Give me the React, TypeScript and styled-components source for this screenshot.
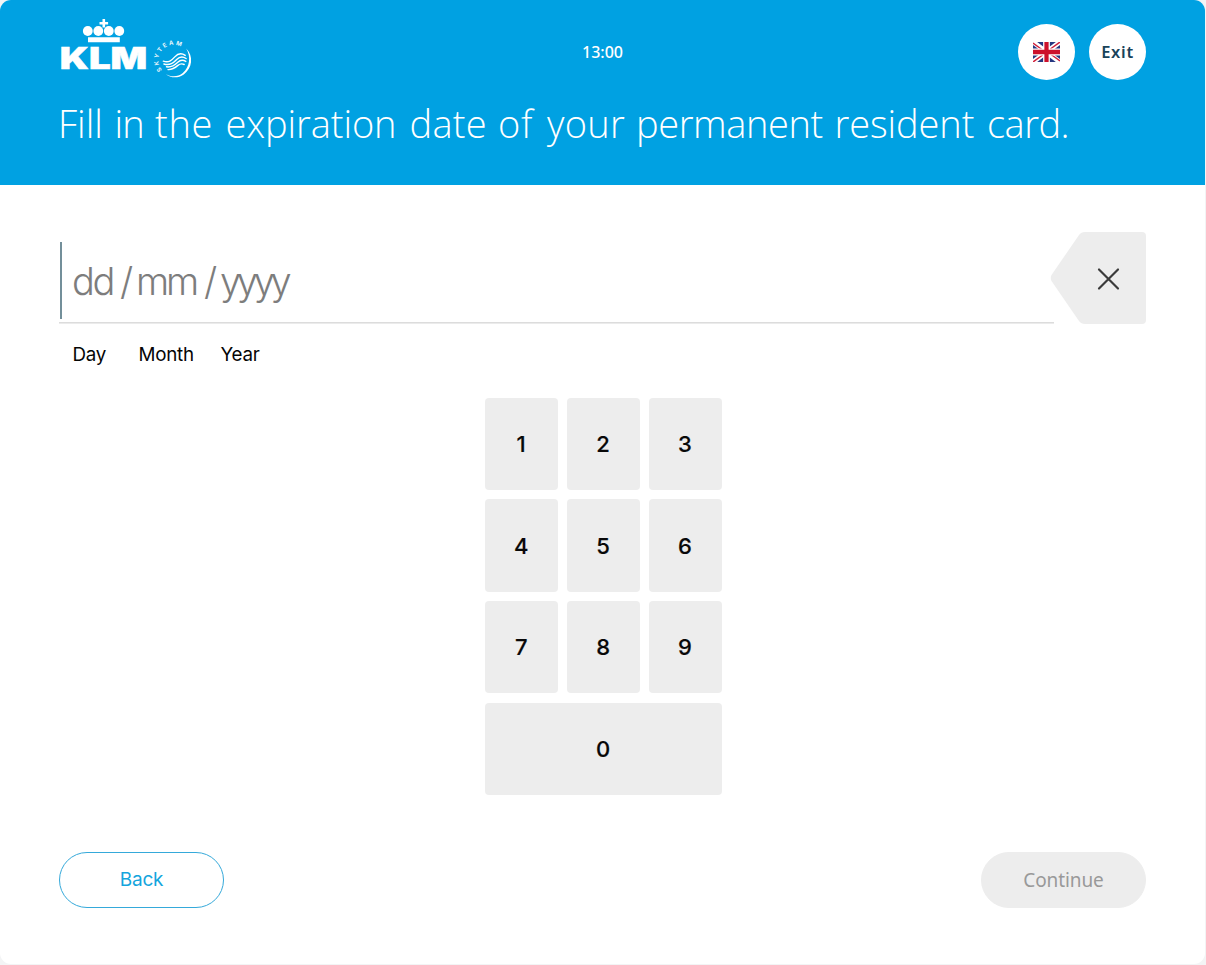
import React from "react";
import styled, { createGlobalStyle } from "styled-components";

const GlobalStyle = createGlobalStyle`
  * { box-sizing: border-box; }
  body { margin: 0; background: #f3f4f5; font-family: Inter, sans-serif; }
  button { margin: 0; padding: 0; border: 0; font: inherit; color: inherit; }
`;

const Screen = styled.div`
  width: 1205px;
  height: 964px;
  display: flex;
  flex-direction: column;
  overflow: hidden;
  border-radius: 11px;
  background: #fff;
`;

const Header = styled.header`
  height: 185px;
  flex: none;
  padding: 19px 59px 0 58px;
  background: #00a1e2;
  color: #fff;
`;

const TopBar = styled.div`
  display: grid;
  grid-template-columns: 1fr auto 1fr;
  align-items: start;
  height: 66px;
`;

const Clock = styled.time`
  padding: 21px 0 0 1px;
  font: 500 16px/24px "Noto Sans", sans-serif;
`;

const Actions = styled.div`
  display: flex;
  justify-content: flex-end;
  gap: 14px;
  padding-top: 5px;
`;

const RoundButton = styled.button`
  width: 57px;
  height: 56px;
  display: flex;
  align-items: center;
  justify-content: center;
  border-radius: 50%;
  background: #fff;
  color: #18435a;
  font: 600 16.5px/24px "Noto Sans", sans-serif;
  letter-spacing: 0.7px;
`;

const Title = styled.h1`
  margin: 14px 0 0;
  font: 300 38px/48px "Open Sans", sans-serif;
  white-space: pre;
`;

const Word = styled.span<{ $width: number; $spacing?: number }>`
  display: inline-block;
  width: ${(p) => p.$width}px;
  letter-spacing: ${(p) => p.$spacing ?? 0.27}px;
`;

const Main = styled.main`
  flex: 1;
  padding: 47px 59px 0 59px;
`;

const Entry = styled.div`
  display: flex;
  height: 92px;
`;

const DateInput = styled.div`
  width: 995px;
  height: 91px;
  padding: 10px 0 3px 1px;
  display: flex;
  border-bottom: 1px solid #dcdcdc;
  box-shadow: 0 1px 0 #ebebeb;
`;

const Caret = styled.span`
  width: 2px;
  height: 77px;
  background: #738f9a;
`;

const Placeholder = styled.span`
  padding: 13px 0 0 10px;
  display: flex;
  color: #7d7d7d;
  font-size: 38px;
  font-weight: 300;
  line-height: 52px;
`;

const Part = styled.span<{ $width: number; $spacing: number }>`
  width: ${(p) => p.$width}px;
  letter-spacing: ${(p) => p.$spacing}px;
  white-space: nowrap;
`;

const ClearButton = styled.button`
  width: 96px;
  height: 92px;
  flex: none;
  margin-left: -4px;
  background: none;
  svg { display: block; }
`;

const Labels = styled.div`
  display: flex;
  padding: 18px 0 0 13.5px;
  color: #050505;
  font-size: 18.8px;
  line-height: 26px;
  letter-spacing: -0.25px;
`;

const Label = styled.span<{ $width: number }>`
  width: ${(p) => p.$width}px;
`;

const Keypad = styled.div`
  display: grid;
  grid-template-columns: repeat(3, 72.6px);
  grid-auto-rows: 92.3px;
  gap: 9.4px 9.3px;
  width: 237px;
  margin: 29.7px 0 0 426.2px;
`;

const Key = styled.button<{ $wide?: boolean }>`
  grid-column: span ${(p) => (p.$wide ? 3 : 1)};
  padding-right: 0.6px;
  border-radius: 4px;
  background: #ededed;
  color: #080808;
  font-size: 22px;
  font-weight: 500;
  -webkit-text-stroke: 0.2px #080808;
`;

const Footer = styled.footer`
  display: flex;
  justify-content: space-between;
  margin-top: 56.6px;
`;

const Pill = styled.button<{ $disabled?: boolean }>`
  width: 165px;
  height: 56px;
  padding-top: ${(p) => (p.$disabled ? 0 : 1)}px;
  border-radius: 29px;
  border: 1px solid ${(p) => (p.$disabled ? "#ededed" : "#35a9da")};
  background: ${(p) => (p.$disabled ? "#ededed" : "#fff")};
  color: ${(p) => (p.$disabled ? "#999" : "#14a5dd")};
  font-family: ${(p) => (p.$disabled ? '"Noto Sans"' : "Inter")}, sans-serif;
  font-size: 19px;
  line-height: 26px;
  letter-spacing: ${(p) => (p.$disabled ? -0.1 : -0.2)}px;
`;

const Logo = () => (
  <svg width="140" height="62" viewBox="58 19 140 62" fill="#fff" aria-label="KLM SkyTeam">
    <path d="M102.5 19h2.6v2.9h3v2.6h-3v3h-2.6v-3h-3v-2.6h3z" />
    {[87.8, 98.3, 108.8, 119.3].map((x) => (
      <circle key={x} cx={x} cy="31" r="4.9" />
    ))}
    <path d="M88 37.2h31.8v5H88z" />
    <text x="59.8" y="69" fontFamily="Inter" fontWeight="900" fontSize="29.5" textLength="87.5" lengthAdjust="spacingAndGlyphs" stroke="#fff" strokeWidth=".5">KLM</text>
    <path id="skyteam-arc" d="M162 70A15.2 15.2 0 0 1 185.5 50.3" fill="none" />
    <text fontFamily="Inter" fontWeight="700" fontSize="6" opacity=".9">
      <textPath href="#skyteam-arc" textLength="42">SKYTEAM</textPath>
    </text>
    <path d="M186.2 48.6C193.8 56 192.4 68.5 183.8 74.4C177.9 78.5 170.4 78.1 165.8 73.9C171 77.2 178 76.9 182.8 73C189.8 67 191.2 56.7 186.2 48.6Z" />
    <g fill="none" stroke="#fff" strokeWidth="1.4" strokeLinecap="round">
      <path d="M163.3 61.2c5.5 1.8 8.2-.6 11.5-4.3 3.4-3.8 6.8-4 10.4-1.5" />
      <path d="M163.9 64c6.2 1.8 9.4-1 12.8-4.5 3-3 6.2-3.1 9.4-1" />
      <path d="M166.5 66.8c5 .8 8.2-1.6 11.3-4.6 2.6-2.4 5.3-2.4 8-.8" />
      <path d="M168 69.6c4.6.3 7-1.7 9.9-4.2 2.2-1.8 4.2-1.9 6.3-.9" />
    </g>
  </svg>
);

const Flag = () => (
  <svg width="27" height="20" viewBox="0 0 28 20" preserveAspectRatio="none" aria-label="English">
    <rect width="28" height="20" fill="#263780" />
    <path d="M0 0l28 20M28 0L0 20" stroke="#fff" strokeWidth="5" />
    <path d="M0 1l10 7M18 7l10-7M0 20l10-7M18 12l10 7" stroke="#d1213c" strokeWidth="1.5" />
    <path d="M14 0v20M0 10h28" stroke="#fff" strokeWidth="7" />
    <path d="M14 0v20M0 10h28" stroke="#cc102b" strokeWidth="4.4" />
  </svg>
);

const titleWords: { text: string; width: number; spacing?: number }[] = [
  { text: "Fill ", width: 56.5, spacing: 0 },
  { text: "in ", width: 40.5, spacing: -0.8 },
  { text: "the ", width: 70.5, spacing: 0.7 },
  { text: "expiration ", width: 184, spacing: -0.1 },
  { text: "date ", width: 88.5 },
  { text: "of ", width: 49, spacing: 0.6 },
  { text: "your ", width: 89 },
  { text: "permanent ", width: 198.5, spacing: -0.4 },
  { text: "resident ", width: 152.5, spacing: -0.1 },
  { text: "card.", width: 90, spacing: -0.5 },
];

export default function App() {
  return (
    <Screen>
      <GlobalStyle />
      <Header>
        <TopBar>
          <Logo />
          <Clock>13:00</Clock>
          <Actions>
            <RoundButton><Flag /></RoundButton>
            <RoundButton>Exit</RoundButton>
          </Actions>
        </TopBar>
        <Title>
          {titleWords.map((w) => (
            <Word key={w.text} $width={w.width} $spacing={w.spacing}>{w.text}</Word>
          ))}
        </Title>
      </Header>
      <Main>
        <Entry>
          <DateInput>
            <Caret />
            <Placeholder>
              <Part $width={48} $spacing={-2.4}>dd</Part>
              <Part $width={16} $spacing={0}>/</Part>
              <Part $width={68} $spacing={-3.2}>mm</Part>
              <Part $width={16} $spacing={0}>/</Part>
              <Part $width={70} $spacing={-4.3}>yyyy</Part>
            </Placeholder>
          </DateInput>
          <ClearButton aria-label="Clear">
            <svg width="96" height="92" viewBox="0 0 96 92">
              <path d="M35 0H92Q96 0 96 4V88Q96 92 92 92H35Q31 92 29 89L1.5 49Q0 46 1.5 43L29 3Q31 0 35 0Z" fill="#ededed" />
              <path d="M49 37.5L68 56.5M68 37.5L49 56.5" stroke="#3b3b3b" strokeWidth="2.2" strokeLinecap="round" />
            </svg>
          </ClearButton>
        </Entry>
        <Labels>
          <Label $width={66}>Day</Label>
          <Label $width={82}>Month</Label>
          <Label $width={60}>Year</Label>
        </Labels>
        <Keypad>
          {[1, 2, 3, 4, 5, 6, 7, 8, 9].map((n) => (
            <Key key={n}>{n}</Key>
          ))}
          <Key $wide>0</Key>
        </Keypad>
        <Footer>
          <Pill>Back</Pill>
          <Pill $disabled disabled>Continue</Pill>
        </Footer>
      </Main>
    </Screen>
  );
}
